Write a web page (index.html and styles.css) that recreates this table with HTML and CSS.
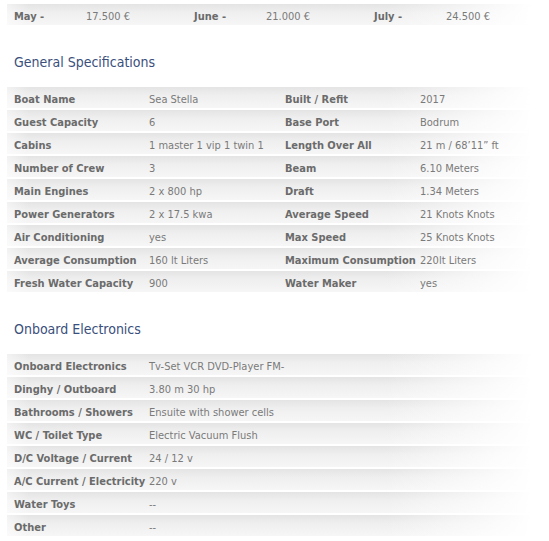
FILE: index.html
```html
<!DOCTYPE html>
<html>
<head>
<meta charset="utf-8">
<link rel="stylesheet" href="styles.css">
</head>
<body>
<div class="page">
  <div class="row prices">
    <div class="lbl">May -</div><div class="val">17.500 €</div>
    <div class="lbl">June -</div><div class="val">21.000 €</div>
    <div class="lbl">July -</div><div class="val">24.500 €</div>
  </div>

  <h2 class="heading">General Specifications</h2>
  <div class="table">
    <div class="row specs"><div class="lbl">Boat Name</div><div class="val">Sea Stella</div><div class="lbl">Built / Refit</div><div class="val">2017</div></div>
    <div class="row specs"><div class="lbl">Guest Capacity</div><div class="val">6</div><div class="lbl">Base Port</div><div class="val">Bodrum</div></div>
    <div class="row specs"><div class="lbl">Cabins</div><div class="val">1 master 1 vip 1 twin 1</div><div class="lbl">Length Over All</div><div class="val">21 m / 68’11” ft</div></div>
    <div class="row specs"><div class="lbl">Number of Crew</div><div class="val">3</div><div class="lbl">Beam</div><div class="val">6.10 Meters</div></div>
    <div class="row specs"><div class="lbl">Main Engines</div><div class="val">2 x 800 hp</div><div class="lbl">Draft</div><div class="val">1.34 Meters</div></div>
    <div class="row specs"><div class="lbl">Power Generators</div><div class="val">2 x 17.5 kwa</div><div class="lbl">Average Speed</div><div class="val">21 Knots Knots</div></div>
    <div class="row specs"><div class="lbl">Air Conditioning</div><div class="val">yes</div><div class="lbl">Max Speed</div><div class="val">25 Knots Knots</div></div>
    <div class="row specs"><div class="lbl">Average Consumption</div><div class="val">160 lt Liters</div><div class="lbl">Maximum Consumption</div><div class="val">220lt Liters</div></div>
    <div class="row specs"><div class="lbl">Fresh Water Capacity</div><div class="val">900</div><div class="lbl">Water Maker</div><div class="val">yes</div></div>
  </div>

  <h2 class="heading">Onboard Electronics</h2>
  <div class="table">
    <div class="row elec"><div class="lbl">Onboard Electronics</div><div class="val">Tv-Set VCR DVD-Player FM-</div></div>
    <div class="row elec"><div class="lbl">Dinghy / Outboard</div><div class="val">3.80 m 30 hp</div></div>
    <div class="row elec"><div class="lbl">Bathrooms / Showers</div><div class="val">Ensuite with shower cells</div></div>
    <div class="row elec"><div class="lbl">WC / Toilet Type</div><div class="val">Electric Vacuum Flush</div></div>
    <div class="row elec"><div class="lbl">D/C Voltage / Current</div><div class="val">24 / 12 v</div></div>
    <div class="row elec"><div class="lbl">A/C Current / Electricity</div><div class="val">220 v</div></div>
    <div class="row elec"><div class="lbl">Water Toys</div><div class="val">--</div></div>
    <div class="row elec"><div class="lbl">Other</div><div class="val">--</div></div>
  </div>
</div>
</body>
</html>
```

FILE: styles.css
```css
html, body {
  margin: 0;
  padding: 0;
  background: #fff;
}
.page {
  padding: 4px 1px 0 7px;
  font-family: "DejaVu Sans Condensed", "DejaVu Sans", sans-serif;
  font-size: 11px;
  color: #777;
}
.row {
  display: grid;
  height: 21px;
  align-items: center;
  margin-bottom: 2px;
  background:
    linear-gradient(to right, rgba(255,255,255,0.5) 0%, rgba(255,255,255,0) 4%, rgba(255,255,255,0) 70%, #fff 97%),
    linear-gradient(to bottom, #e4e4e4 0%, #efefef 40%, #f6f6f6 100%);
}
.row > div {
  padding-left: 7px;
  padding-top: 4px;
  white-space: nowrap;
}
.prices {
  grid-template-columns: 72px 108px 72px 108px 72px 108px;
}
.specs {
  grid-template-columns: 135px 136px 135px 1fr;
}
.elec {
  grid-template-columns: 135px 1fr;
}
.lbl {
  font-weight: bold;
  color: #6b6b6b;
}
.val {
  color: #7a7a7a;
}
.heading {
  margin: 0;
  padding: 25px 0 15px 7px;
  height: 20px;
  line-height: 20px;
  font-family: "DejaVu Sans Condensed", "DejaVu Sans", sans-serif;
  font-weight: normal;
  font-size: 14px;
  color: #3a4f7c;
}
```
